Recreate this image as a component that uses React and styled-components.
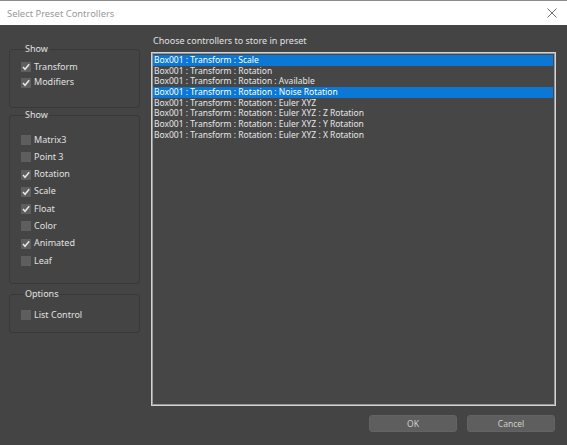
import React from "react";
import styled, { createGlobalStyle } from "styled-components";

const GlobalStyle = createGlobalStyle`
  html, body {
    margin: 0;
    background: #444444;
  }
  * {
    box-sizing: border-box;
  }
`;

const showItems = [
  { label: "Transform", checked: true },
  { label: "Modifiers", checked: true },
];

const typeItems = [
  { label: "Matrix3", checked: false },
  { label: "Point 3", checked: false },
  { label: "Rotation", checked: true },
  { label: "Scale", checked: true },
  { label: "Float", checked: true },
  { label: "Color", checked: false },
  { label: "Animated", checked: true },
  { label: "Leaf", checked: false },
];

const controllers = [
  { text: "Box001 : Transform : Scale", selected: true },
  { text: "Box001 : Transform : Rotation" },
  { text: "Box001 : Transform : Rotation : Available" },
  { text: "Box001 : Transform : Rotation : Noise Rotation", selected: true },
  { text: "Box001 : Transform : Rotation : Euler XYZ" },
  { text: "Box001 : Transform : Rotation : Euler XYZ : Z Rotation" },
  { text: "Box001 : Transform : Rotation : Euler XYZ : Y Rotation" },
  { text: "Box001 : Transform : Rotation : Euler XYZ : X Rotation" },
];

function Check({ label, checked, pitch }) {
  return (
    <CheckRow $pitch={pitch}>
      <Box>
        {checked && (
          <svg width="10" height="10" viewBox="0 0 10 10">
            <path d="M2 5 L4 7.3 L8.2 2.2" fill="none" stroke="#e6e6e6" strokeWidth="1.5" />
          </svg>
        )}
      </Box>
      <span>{label}</span>
    </CheckRow>
  );
}

export default function App() {
  return (
    <>
      <GlobalStyle />
      <Window>
        <TitleBar>
          <Title>Select Preset Controllers</Title>
          <CloseBtn>
            <svg width="10" height="10" viewBox="0 0 10 10">
              <path d="M0.5 0.5 L9.5 9.5 M9.5 0.5 L0.5 9.5" stroke="#6e6e6e" strokeWidth="1" />
            </svg>
          </CloseBtn>
        </TitleBar>
        <Body>
          <LeftColumn>
            <Group $height={64}>
              <Legend>Show</Legend>
              <GroupRows $top={8}>
                {showItems.map((it) => (
                  <Check key={it.label} {...it} pitch={15.5} />
                ))}
              </GroupRows>
            </Group>
            <Group $height={174} $gap={2}>
              <Legend>Show</Legend>
              <GroupRows $top={15}>
                {typeItems.map((it) => (
                  <Check key={it.label} {...it} pitch={17.3} />
                ))}
              </GroupRows>
            </Group>
            <Group $height={44} $gap={5}>
              <Legend>Options</Legend>
              <GroupRows $top={11}>
                <Check label="List Control" checked={false} pitch={16} />
              </GroupRows>
            </Group>
          </LeftColumn>
          <RightColumn>
            <Caption>Choose controllers to store in preset</Caption>
            <ListBox>
              {controllers.map((c) => (
                <ListRow key={c.text} $selected={c.selected}>
                  {c.text}
                </ListRow>
              ))}
            </ListBox>
            <Buttons>
              <Button>OK</Button>
              <Button>Cancel</Button>
            </Buttons>
          </RightColumn>
        </Body>
      </Window>
    </>
  );
}

const Window = styled.div`
  width: 567px;
  height: 445px;
  display: flex;
  flex-direction: column;
  background: #444444;
  font-family: "Noto Sans", "Open Sans", sans-serif;
  color: #dcdcdc;
  overflow: hidden;
`;

const TitleBar = styled.div`
  height: 25px;
  flex: none;
  background: #ffffff;
  border-top: 1px solid #8c8c8c;
  display: flex;
  align-items: center;
  justify-content: space-between;
  padding: 0 9px 0 7px;
`;

const Title = styled.div`
  font-size: 9.4px;
  color: #999999;
`;

const CloseBtn = styled.div`
  width: 12px;
  height: 12px;
  display: flex;
  align-items: center;
  justify-content: center;
`;

const Body = styled.div`
  flex: 1;
  display: flex;
  padding-left: 9px;
`;

const LeftColumn = styled.div`
  width: 131px;
  padding-top: 19px;
  display: flex;
  flex-direction: column;
`;

const Group = styled.fieldset`
  margin: ${(p) => p.$gap || 0}px 0 0 0;
  padding: 0 0 0 11px;
  height: ${(p) => p.$height}px;
  border: 1px solid #393939;
  border-radius: 3px;
  min-width: 0;
`;

const Legend = styled.legend`
  font-size: 9px;
  line-height: 10px;
  padding: 0 1px;
  margin-left: 3px;
  color: #e0e0e0;
`;

const GroupRows = styled.div`
  padding-top: ${(p) => p.$top}px;
  display: flex;
  flex-direction: column;
`;

const CheckRow = styled.div`
  height: ${(p) => p.$pitch}px;
  display: flex;
  align-items: flex-start;
  gap: 3px;
  font-size: 9px;
  line-height: 10px;
  color: #e0e0e0;
  span {
    margin-top: -0.5px;
  }
`;

const Box = styled.div`
  width: 10px;
  height: 10px;
  flex: none;
  background: #5e5e5e;
  display: flex;
`;

const RightColumn = styled.div`
  margin-left: 11px;
  width: 405px;
  display: flex;
  flex-direction: column;
  padding-top: 10px;
`;

const Caption = styled.div`
  height: 12px;
  padding-left: 2px;
  font-size: 9px;
  line-height: 12px;
  margin-bottom: 5px;
  color: #e0e0e0;
`;

const ListBox = styled.div`
  height: 354px;
  border: 1px solid #d2d2d2;
  box-shadow: inset 0 0 0 1px #9a9a9a;
  padding: 2px 2px 2px 1px;
  background: #464646;
`;

const ListRow = styled.div`
  height: 10.67px;
  line-height: 10.67px;
  font-size: 8.5px;
  padding-left: 1px;
  white-space: nowrap;
  color: ${(p) => (p.$selected ? "#ffffff" : "#e6e6e6")};
  background: ${(p) => (p.$selected ? "#0a78d4" : "transparent")};
`;

const Buttons = styled.div`
  display: flex;
  justify-content: flex-end;
  gap: 10px;
  margin-top: 9px;
  padding-right: 1px;
`;

const Button = styled.div`
  width: 88px;
  height: 17px;
  border-radius: 3px;
  background: #5e5e5e;
  border: 1px solid #636363;
  color: #cfcfcf;
  font-size: 8.5px;
  display: flex;
  align-items: center;
  justify-content: center;
`;
